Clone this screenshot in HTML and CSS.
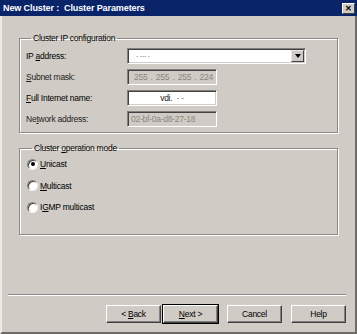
FILE: index.html
```html
<!DOCTYPE html>
<html lang="en">
<head>
    <meta charset="UTF-8">
    <title>New Cluster : Cluster Parameters</title>
    <link rel="stylesheet" href="styles.css">
</head>
<body>
    <div class="window">
        <div class="titlebar">
            <span class="title">New Cluster :&nbsp; Cluster Parameters</span>
            <span class="close">&#x2715;</span>
        </div>
        <div class="frame">
            <div class="content">
                <fieldset class="group ipgroup">
                    <legend>Cluster IP configuration</legend>
                    <div class="rows">
                        <label class="lbl">IP <u>a</u>ddress:</label>
                        <div class="field combo">
                            <span class="val">&middot; &middot;&middot;&middot; &middot;</span>
                            <span class="drop"><span class="tri"></span></span>
                        </div>
                        <label class="lbl dim"><u>S</u>ubnet mask:</label>
                        <div class="field off ip4">
                            <span>255</span><span>.</span><span>255</span><span>.</span><span>255</span><span>.</span><span>224</span>
                        </div>
                        <label class="lbl"><u>F</u>ull Internet name:</label>
                        <div class="field name"><span class="val">vdi. &nbsp;&middot; &middot;</span></div>
                        <label class="lbl dim">Ne<u>t</u>work address:</label>
                        <div class="field off"><span class="val">02-bf-0a-d8-27-18</span></div>
                    </div>
                </fieldset>

                <fieldset class="group modegroup">
                    <legend>Cluster <u>o</u>peration mode</legend>
                    <div class="radios">
                        <div class="opt"><span class="radio on"></span><span><u>U</u>nicast</span></div>
                        <div class="opt"><span class="radio"></span><span><u>M</u>ulticast</span></div>
                        <div class="opt"><span class="radio"></span><span>I<u>G</u>MP multicast</span></div>
                    </div>
                </fieldset>
            </div>

            <div class="footer">
                <div class="rule"></div>
                <div class="buttons">
                    <button class="btn back">&lt; <u>B</u>ack</button>
                    <button class="btn next"><u>N</u>ext &gt;</button>
                    <button class="btn">Cancel</button>
                    <button class="btn">Help</button>
                </div>
            </div>
        </div>
    </div>
</body>
</html>
```

FILE: styles.css
```css
*{
    margin: 0;
    padding: 0;
    box-sizing: border-box;
}
body{
    background: #d0ccc5;
    font-family: "Liberation Sans", Arial, sans-serif;
    font-size: 8.5px;
    letter-spacing: -0.25px;
    color: #000;
}
u{
    text-decoration: underline;
    text-underline-offset: 1px;
}
.window{
    width: 357px;
    height: 334px;
    display: flex;
    flex-direction: column;
    background: #d0ccc5;
}
.titlebar{
    height: 16px;
    background: #0a246a;
    display: flex;
    align-items: center;
    justify-content: space-between;
    padding: 0 2px 0 3px;
}
.title{
    color: #fff;
    font-weight: bold;
    font-size: 9px;
    letter-spacing: -0.1px;
}
.close{
    width: 13px;
    height: 11px;
    background: #d0ccc5;
    border: 1px solid;
    border-color: #fff #404040 #404040 #fff;
    font-size: 8px;
    font-weight: bold;
    line-height: 9px;
    text-align: center;
    letter-spacing: 0;
}
.frame{
    flex: 1;
    display: flex;
    flex-direction: column;
    border-left: 2px solid #eceae4;
    border-right: 2px solid #6f6c68;
    border-bottom: 2px solid #6f6c68;
}
.content{
    flex: 1;
    padding: 17px 17px 0 17px;
}

/* group boxes */
.group{
    border: 1px solid #8c8984;
    box-shadow: inset 1px 1px #fff, 1px 1px #fff;
    padding: 0;
}
.group legend{
    margin-left: 5px;
    padding: 0 2px;
    line-height: 10px;
}
.ipgroup{
    padding: 5px 0 5px 6px;
}
.rows{
    display: grid;
    grid-template-columns: 101px auto;
    row-gap: 5px;
    align-items: center;
}
.lbl{
    line-height: 16px;
}
.lbl.dim{
    color: #222;
}
.field{
    height: 16px;
    width: 90px;
    background: #fff;
    border: 1px solid;
    border-color: #808080 #fff #fff #808080;
    box-shadow: inset 1px 1px #404040, inset -1px -1px #d0ccc5;
    display: flex;
    align-items: center;
    padding: 0 3px;
    color: #222;
}
.field.off{
    background: #d0ccc5;
    color: #8a8780;
}
.ip4{
    justify-content: space-between;
    padding: 0 3px 0 6px;
}
.name{
    justify-content: center;
}
.combo{
    width: 179px;
    justify-content: space-between;
    padding: 0 1px 0 8px;
    font-size: 7px;
}
.drop{
    width: 13px;
    height: 12px;
    background: #d0ccc5;
    border: 1px solid;
    border-color: #e8e6e0 #404040 #404040 #e8e6e0;
    display: flex;
    align-items: center;
    justify-content: center;
}
.tri{
    width: 0;
    height: 0;
    border-left: 3px solid transparent;
    border-right: 3px solid transparent;
    border-top: 4px solid #000;
}

.modegroup{
    margin-top: 10px;
    padding: 4px 0 20px 7px;
}
.radios{
    display: flex;
    flex-direction: column;
    gap: 7.5px;
}
.opt{
    height: 14px;
    display: flex;
    align-items: center;
    gap: 2px;
}
.radio{
    width: 11px;
    height: 11px;
    border-radius: 50%;
    background: #fff;
    border: 1px solid;
    border-color: #808080 #f4f2ee #f4f2ee #808080;
    box-shadow: inset 1px 1px #404040;
    display: flex;
    align-items: center;
    justify-content: center;
}
.radio.on::after{
    content: "";
    width: 4px;
    height: 4px;
    border-radius: 50%;
    background: #000;
}

/* bottom */
.footer{
    padding: 0 9px 9px 6px;
}
.rule{
    height: 2px;
    border-top: 1px solid #8c8984;
    border-bottom: 1px solid #fff;
}
.buttons{
    margin-top: 9px;
    display: flex;
    justify-content: flex-end;
    gap: 9px;
}
.btn{
    width: 55px;
    height: 18px;
    background: #d0ccc5;
    border: 1px solid;
    border-color: #fff #404040 #404040 #fff;
    box-shadow: inset -1px -1px #808080;
    font-family: inherit;
    font-size: 8.5px;
    letter-spacing: -0.25px;
    color: #000;
}
.back{
    margin-right: -7px;
}
.next{
    outline: 1px solid #000;
    outline-offset: 0;
}
```
